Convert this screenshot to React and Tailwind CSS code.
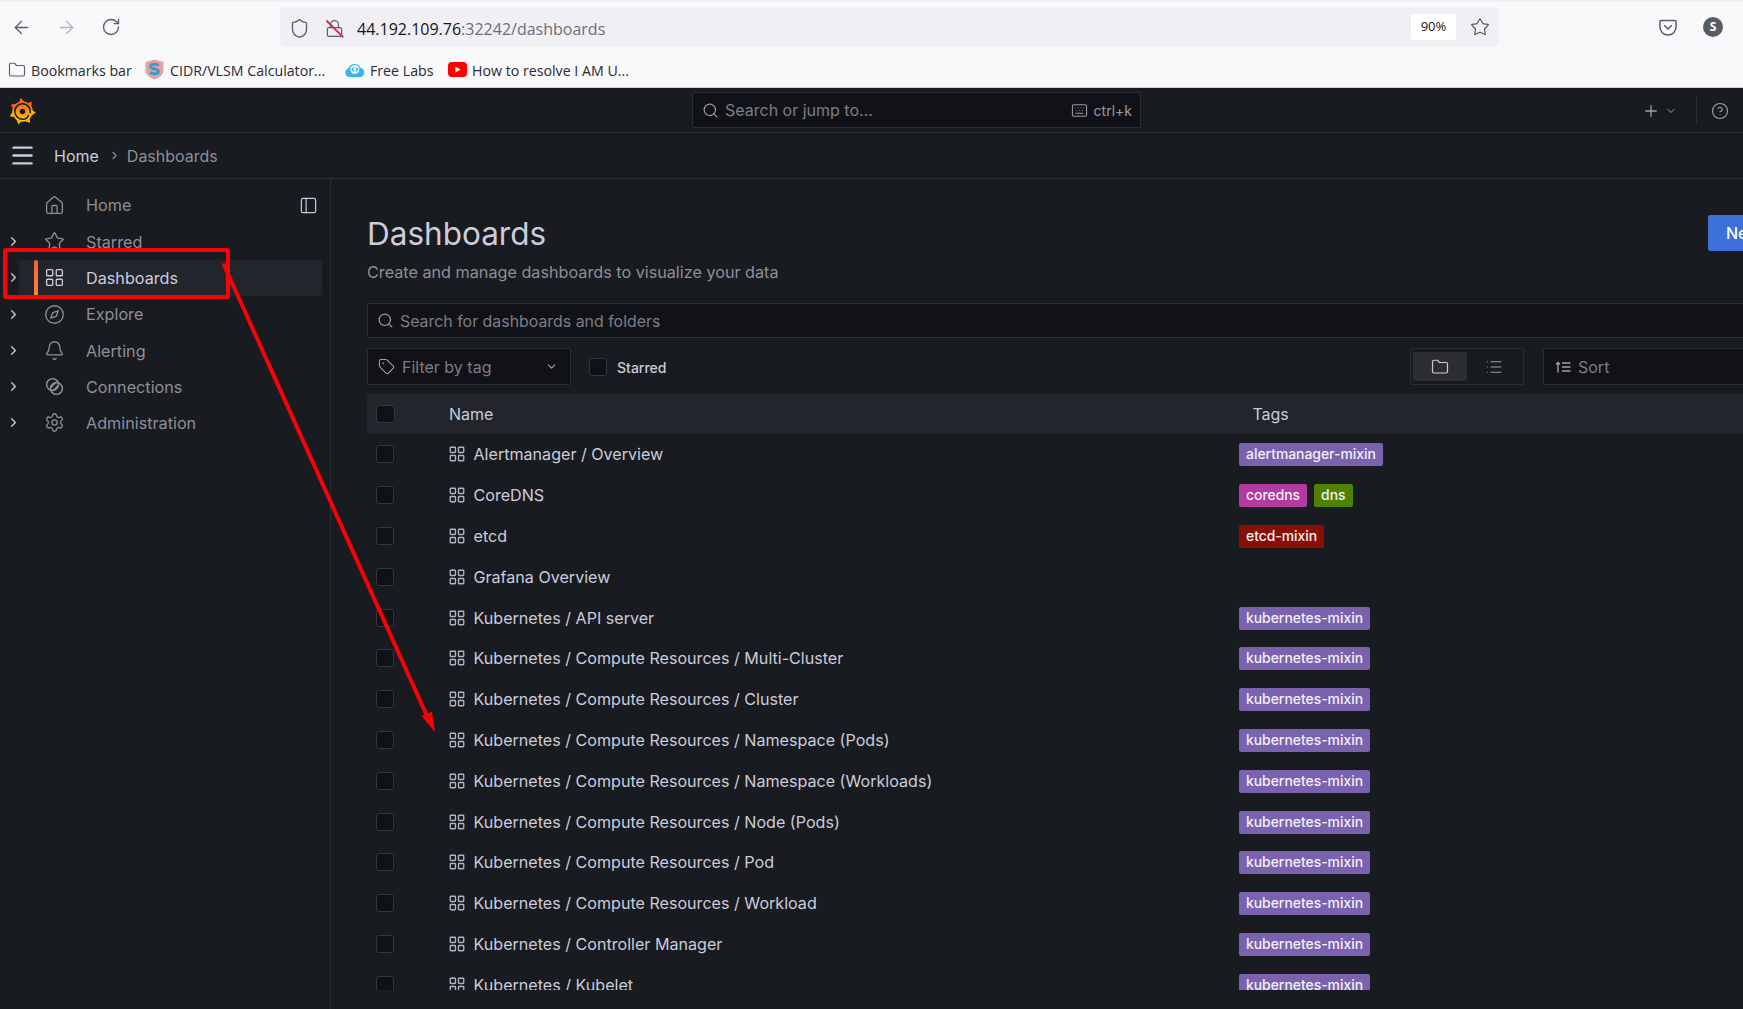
import React from "react";
import {
  ArrowLeft, ArrowRight, RotateCw, Shield, Lock, Star, Folder, Search, Keyboard, Plus, ChevronDown,
  CircleHelp, Menu, ChevronRight, House, LayoutGrid, Compass, Bell, Settings, PanelLeft, Tag, List,
} from "lucide-react";

const inter = "font-['Inter',sans-serif]";

function GrafanaLogo() {
  const teeth = [0, 51, 103, 154, 206, 257, 309];
  return (
    <svg width="27" height="29" viewBox="0 0 26 28">
      <defs>
        <linearGradient id="gf" x1="0" y1="0" x2="0" y2="1">
          <stop offset="0" stopColor="#f05a28" />
          <stop offset="1" stopColor="#fbca0a" />
        </linearGradient>
      </defs>
      <circle cx="13" cy="14" r="10" fill="url(#gf)" />
      {teeth.map((a) => (
        <path key={a} d="M9.5 6 L11 1 L15.5 5 Z" transform={`rotate(${a} 13 14)`} fill={a > 100 && a < 260 ? "#fbb014" : "#f26a24"} />
      ))}
      <path d="M20.5 15 A7.5 7.5 0 1 0 13 21.5 C16 21.5 18 20 18.6 18" fill="none" stroke="#181b1f" strokeWidth="1.5" strokeLinecap="round" />
      <circle cx="13" cy="14" r="2.6" fill="#181b1f" />
    </svg>
  );
}

function ConnectionsIcon({ size = 18, color = "#8e8f98" }) {
  return (
    <svg width={size} height={size} viewBox="0 0 24 24" fill="none" stroke={color} strokeWidth="1.7">
      <circle cx="9.8" cy="9.8" r="6.8" />
      <circle cx="14.2" cy="14.2" r="6.8" />
      <path d="M7.5 13.5 L13.5 7.5 M10.5 16.5 L16.5 10.5" />
    </svg>
  );
}

function Pocket() {
  return (
    <svg width="18" height="19" viewBox="0 0 18 19" fill="none" stroke="#5b5b66" strokeWidth="1.5">
      <path d="M2 2.5 H16 A1 1 0 0 1 17 3.5 V9 A8 8 0 0 1 1 9 V3.5 A1 1 0 0 1 2 2.5 Z" />
      <path d="M5.5 7.5 L9 11 L12.5 7.5" strokeLinecap="round" />
    </svg>
  );
}

function CidrIcon() {
  return (
    <svg width="19" height="21" viewBox="0 0 19 21">
      <path d="M9.5 0.5 L18.5 3 V11 C18.5 16 14 19 9.5 20.5 C5 19 0.5 16 0.5 11 V3 Z" fill="#e6a0a0" />
      <path d="M13.5 6.5 C12 5 6 4.6 5.6 7.6 C5.3 10.6 13.6 9.4 13.4 12.6 C13.2 15.4 7 15.2 5.2 13.4" fill="none" stroke="#3f9dc4" strokeWidth="3" />
    </svg>
  );
}

function LabsIcon() {
  return (
    <svg width="20" height="16" viewBox="0 0 20 16">
      <path d="M5 15 A4.5 4.5 0 0 1 3.6 6.2 A6.5 6.5 0 0 1 15.6 6 A4.6 4.6 0 0 1 15.5 15 Z" fill="#35b6e6" />
      <circle cx="9.8" cy="7.5" r="4.6" fill="#e6f7fd" />
      <path d="M8.6 5.6 L7 7.5 L8.6 9.4 M11 5.6 L12.6 7.5 L11 9.4" fill="none" stroke="#2f9fd0" strokeWidth="1.1" />
    </svg>
  );
}

function YouTube() {
  return (
    <svg width="19" height="15" viewBox="0 0 19 15">
      <rect x="0" y="0" width="19" height="15" rx="4" fill="#ff0000" />
      <path d="M7.5 4.5 L12.5 7.5 L7.5 10.5 Z" fill="#fff" />
    </svg>
  );
}

function SortIcon() {
  return (
    <svg width="16" height="12" viewBox="0 0 16 12" fill="none" stroke="#a0a1aa" strokeWidth="1.4">
      <path d="M3 11.5 V1.5 M1 3.5 L3 1.5 L5 3.5" />
      <path d="M7 2 H15.5 M7 6 H15.5 M7 10 H15.5" />
    </svg>
  );
}

function BrowserChrome() {
  return (
    <div className="h-[88px] bg-[#f9f9fb] border-b border-[#cfcfd8] font-['Open_Sans',sans-serif]">
      <div className="h-[2px] bg-[#f0f0f4]" />
      <div className="h-[50px] flex items-center">
        <div className="w-[280px] flex items-center pl-[11px] shrink-0">
          <ArrowLeft size={21} strokeWidth={1.6} className="text-[#5b5b66]" />
          <ArrowRight size={21} strokeWidth={1.6} className="text-[#b4b4bb] ml-[24px]" />
          <RotateCw size={20} strokeWidth={1.6} className="text-[#5b5b66] ml-[24px]" />
        </div>
        <div className="w-[1218px] h-[40px] bg-[#f0f0f4] rounded-[5px] flex items-center pl-[9px] pr-[8px] shrink-0">
          <Shield size={21} strokeWidth={1.5} className="text-[#5b5b66] mt-[2px]" />
          <span className="relative ml-[15px] inline-flex mt-[2px]">
            <Lock size={19} strokeWidth={1.5} className="text-[#5b5b66]" />
            <span className="absolute left-[-2px] top-[9px] w-[24px] h-[1.5px] bg-[#e22850] rotate-[45deg]" />
          </span>
          <span className="ml-[13px] mt-[3px] text-[16px] text-[#15141a]">44.192.109.76<span className="text-[#6d6d78]">:32242/dashboards</span></span>
          <span className="ml-auto w-[45px] h-[26px] bg-white rounded-[2px] text-[13px] text-[#15141a] flex items-center justify-center">90%</span>
          <Star size={20} strokeWidth={1.5} className="text-[#5b5b66] ml-[14px]" />
        </div>
        <div className="ml-[161px] flex items-center">
          <Pocket />
          <span className="ml-[26px] w-[20px] h-[20px] rounded-full bg-[#5b5b66] text-white text-[12px] font-bold flex items-center justify-center">S</span>
        </div>
      </div>
      <div className="h-[35px] flex items-center pl-[8px] text-[14.2px] text-[#2b2a33]">
        <Folder size={18} strokeWidth={1.5} className="text-[#5b5b66]" />
        <span className="ml-[5px] mt-[2px] w-[114px]">Bookmarks bar</span>
        <CidrIcon />
        <span className="ml-[6px] mt-[2px] w-[175px]">CIDR/VLSM Calculator...</span>
        <LabsIcon />
        <span className="ml-[5px] mt-[2px] w-[78px]">Free Labs</span>
        <YouTube />
        <span className="ml-[5px] mt-[2px]">How to resolve I AM U...</span>
      </div>
    </div>
  );
}

function TopBar() {
  return (
    <div className="h-[45px] border-b border-[#2c2e33] relative flex items-center justify-center">
      <div className="absolute left-[9px] top-[9px]"><GrafanaLogo /></div>
      <div className="ml-[90px] w-[449px] h-[36px] bg-[#111217] border border-[#2c2e33] rounded-[2px] flex items-center pl-[9px] pr-[8px] text-[16px] text-[#7c7d85]">
        <Search size={17} strokeWidth={1.6} className="text-[#a0a1aa]" />
        <span className="ml-[6px]">Search or jump to...</span>
        <span className="ml-auto flex items-center text-[14px] text-[#9a9ba4]">
          <Keyboard size={17} strokeWidth={1.5} className="mr-[6px]" />ctrl+k
        </span>
      </div>
      <div className="absolute right-0 top-[9px] h-[27px] flex items-center">
        <Plus size={18} strokeWidth={1.7} className="text-[#a0a1aa]" />
        <ChevronDown size={12} strokeWidth={2} className="text-[#a0a1aa] ml-[5px]" />
        <span className="ml-[19px] h-[27px] w-px bg-[#2c2e33]" />
        <CircleHelp size={18} strokeWidth={1.5} className="text-[#a0a1aa] ml-[14px] mr-[14px]" />
      </div>
    </div>
  );
}

function Breadcrumb() {
  return (
    <div className="h-[46px] border-b border-[#2c2e33] flex items-center pl-[9px] text-[16px]">
      <Menu size={27} strokeWidth={2.2} className="text-[#ccccdc]" />
      <span className="ml-[18px] text-[#ccccdc]">Home</span>
      <ChevronRight size={13} strokeWidth={2} className="text-[#8e8f98] ml-[9px] mr-[6px]" />
      <span className="text-[#8e8f98]">Dashboards</span>
    </div>
  );
}

const navItems = [
  { label: "Home", Icon: House, noChevron: true },
  { label: "Starred", Icon: Star },
  { label: "Dashboards", Icon: LayoutGrid, active: true },
  { label: "Explore", Icon: Compass },
  { label: "Alerting", Icon: Bell },
  { label: "Connections", Icon: ConnectionsIcon },
  { label: "Administration", Icon: Settings },
];

function Sidebar() {
  return (
    <div className="relative w-[331px] shrink-0 border-r border-[#2c2e33] pt-[8px] px-[8px]">
      <PanelLeft size={19} strokeWidth={1.5} className="absolute left-[299px] top-[17px] text-[#ccccdc]" />
      {navItems.map(({ label, Icon, active, noChevron }) => (
        <div key={label} className="h-[36.3px] flex items-center text-[16.2px]">
          <span className="w-[11px] shrink-0 flex justify-start">
            {!noChevron && <ChevronRight size={15} strokeWidth={2} className="text-[#ccccdc] -ml-[2px] shrink-0" />}
          </span>
          <div className={`flex-1 h-[36px] flex items-center rounded-[2px] ${active ? "bg-[#22252b] text-[#ccccdc]" : "text-[#8e8f98]"}`}>
            <span className={`ml-[15px] w-[4px] h-[36px] rounded-[2px] -mr-[19px] ${active ? "bg-gradient-to-b from-[#f55f3e] to-[#ff8833]" : ""}`} />
            <span className="ml-[25px] flex shrink-0"><Icon size={21} strokeWidth={1.5} color={active ? "#ccccdc" : "#8e8f98"} /></span>
            <span className="ml-[21px] mt-[1px]">{label}</span>
          </div>
        </div>
      ))}
    </div>
  );
}

function Checkbox({ big }) {
  return <span className={`block shrink-0 bg-[#111217] border border-[#34363c] rounded-[3px] ${big ? "w-[18.5px] h-[18px]" : "w-[18px] h-[18px]"}`} />;
}

const purple = "bg-[#7a62ae]";
const k = { t: "kubernetes-mixin", c: purple };
const rows = [
  { n: "Alertmanager / Overview", tags: [{ t: "alertmanager-mixin", c: purple }] },
  { n: "CoreDNS", tags: [{ t: "coredns", c: "bg-[#b13b9f]" }, { t: "dns", c: "bg-[#508100]" }] },
  { n: "etcd", tags: [{ t: "etcd-mixin", c: "bg-[#890f02]" }] },
  { n: "Grafana Overview", tags: [] },
  { n: "Kubernetes / API server", tags: [k] },
  { n: "Kubernetes / Compute Resources / Multi-Cluster", tags: [k] },
  { n: "Kubernetes / Compute Resources / Cluster", tags: [k] },
  { n: "Kubernetes / Compute Resources / Namespace (Pods)", tags: [k] },
  { n: "Kubernetes / Compute Resources / Namespace (Workloads)", tags: [k] },
  { n: "Kubernetes / Compute Resources / Node (Pods)", tags: [k] },
  { n: "Kubernetes / Compute Resources / Pod", tags: [k] },
  { n: "Kubernetes / Compute Resources / Workload", tags: [k] },
  { n: "Kubernetes / Controller Manager", tags: [k] },
  { n: "Kubernetes / Kubelet", tags: [k] },
];

function Main() {
  return (
    <div className="flex-1 overflow-hidden pl-[36px]">
      <div className="w-[1500px]">
        <div className="mt-[36px] h-[36px] flex items-center">
          <h1 className="text-[31.5px] leading-[36px] mt-[1px] text-[#ccccdc] font-normal">Dashboards</h1>
          <div className="ml-auto w-[159px] h-[36px] bg-[#3d71d9] rounded-[2px] text-white text-[16px] font-medium flex items-center pl-[18px]">New</div>
        </div>
        <div className="mt-[9px] h-[24px] leading-[24px] text-[16.2px] text-[#8e8f98]">Create and manage dashboards to visualize your data</div>
        <div className="mt-[19px] h-[35px] bg-[#111217] border border-[#2c2e33] rounded-[2px] flex items-center pl-[9px] text-[15.9px] text-[#7c7d85]">
          <Search size={17} strokeWidth={1.6} className="text-[#a0a1aa]" />
          <span className="ml-[6px] mt-[2px]">Search for dashboards and folders</span>
        </div>
        <div className="mt-[10px] h-[37px] flex items-center">
          <div className="w-[204px] h-[37px] bg-[#111217] border border-[#2c2e33] rounded-[2px] flex items-center pl-[10px] pr-[12px] text-[16px] text-[#7c7d85]">
            <Tag size={17} strokeWidth={1.5} className="text-[#a0a1aa]" />
            <span className="ml-[7px]">Filter by tag</span>
            <ChevronDown size={13} strokeWidth={2} className="ml-auto text-[#a0a1aa]" />
          </div>
          <span className="ml-[18px]"><Checkbox /></span>
          <span className="ml-[10px] mt-[2px] text-[14px] font-medium text-[#ccccdc]">Starred</span>
          <div className="ml-auto w-[114px] h-[37px] border border-[#2c2e33] rounded-[2px] flex items-center p-[2px]">
            <span className="w-[54px] h-[29px] bg-[#2c2e33] rounded-[2px] flex items-center justify-center">
              <Folder size={18} strokeWidth={1.6} className="text-[#ccccdc]" />
            </span>
            <span className="w-[54px] flex items-center justify-center">
              <List size={18} strokeWidth={1.5} className="text-[#a0a1aa]" />
            </span>
          </div>
          <div className="ml-[19px] w-[324px] shrink-0 h-[37px] bg-[#111217] border border-[#2c2e33] rounded-[2px] flex items-center pl-[11px] text-[16px] text-[#7c7d85]">
            <SortIcon />
            <span className="ml-[7px]">Sort</span>
          </div>
        </div>
        <div className="mt-[9px] h-[40px] bg-[#22252b] flex items-center text-[16px] text-[#ccccdc]">
          <span className="ml-[9px]"><Checkbox big /></span>
          <span className="ml-[54.5px]">Name</span>
          <span className="ml-[759px]">Tags</span>
        </div>
        <div className="h-[556px] overflow-hidden">
          {rows.map((r) => (
            <div key={r.n} className="h-[40.8px] flex items-center text-[16.1px] text-[#ccccdc]">
              <span className="ml-[9px]"><Checkbox /></span>
              <span className="ml-[54px] shrink-0 flex"><LayoutGrid size={18} strokeWidth={1.8} className="text-[#b4b4c4]" /></span>
              <span className="ml-[7.5px] w-[765.5px] shrink-0">{r.n}</span>
              <span className="flex gap-[7px] mt-[1px]">
                {r.tags.map((t) => (
                  <span key={t.t} className={`h-[23px] px-[7px] rounded-[2px] text-[13.9px] leading-[23px] font-medium text-[#f4f0fa] ${t.c}`}>{t.t}</span>
                ))}
              </span>
            </div>
          ))}
        </div>
      </div>
    </div>
  );
}

function Annotation() {
  return (
    <svg className="absolute left-0 top-0 pointer-events-none" width="1743" height="1009">
      <rect x="5" y="250" width="223" height="47" rx="1" fill="none" stroke="#fb0007" strokeWidth="4" />
      <line x1="224" y1="265" x2="427" y2="716" stroke="#fb0007" strokeWidth="4" strokeLinecap="round" />
      <polygon points="435,732 421.5,716 432,711.5" fill="#fb0007" />
    </svg>
  );
}

export default function App() {
  return (
    <div className={`relative w-[1743px] h-[1009px] overflow-hidden bg-[#181b1f] ${inter}`}>
      <BrowserChrome />
      <TopBar />
      <Breadcrumb />
      <div className="flex h-[830px]">
        <Sidebar />
        <Main />
      </div>
      <Annotation />
    </div>
  );
}
